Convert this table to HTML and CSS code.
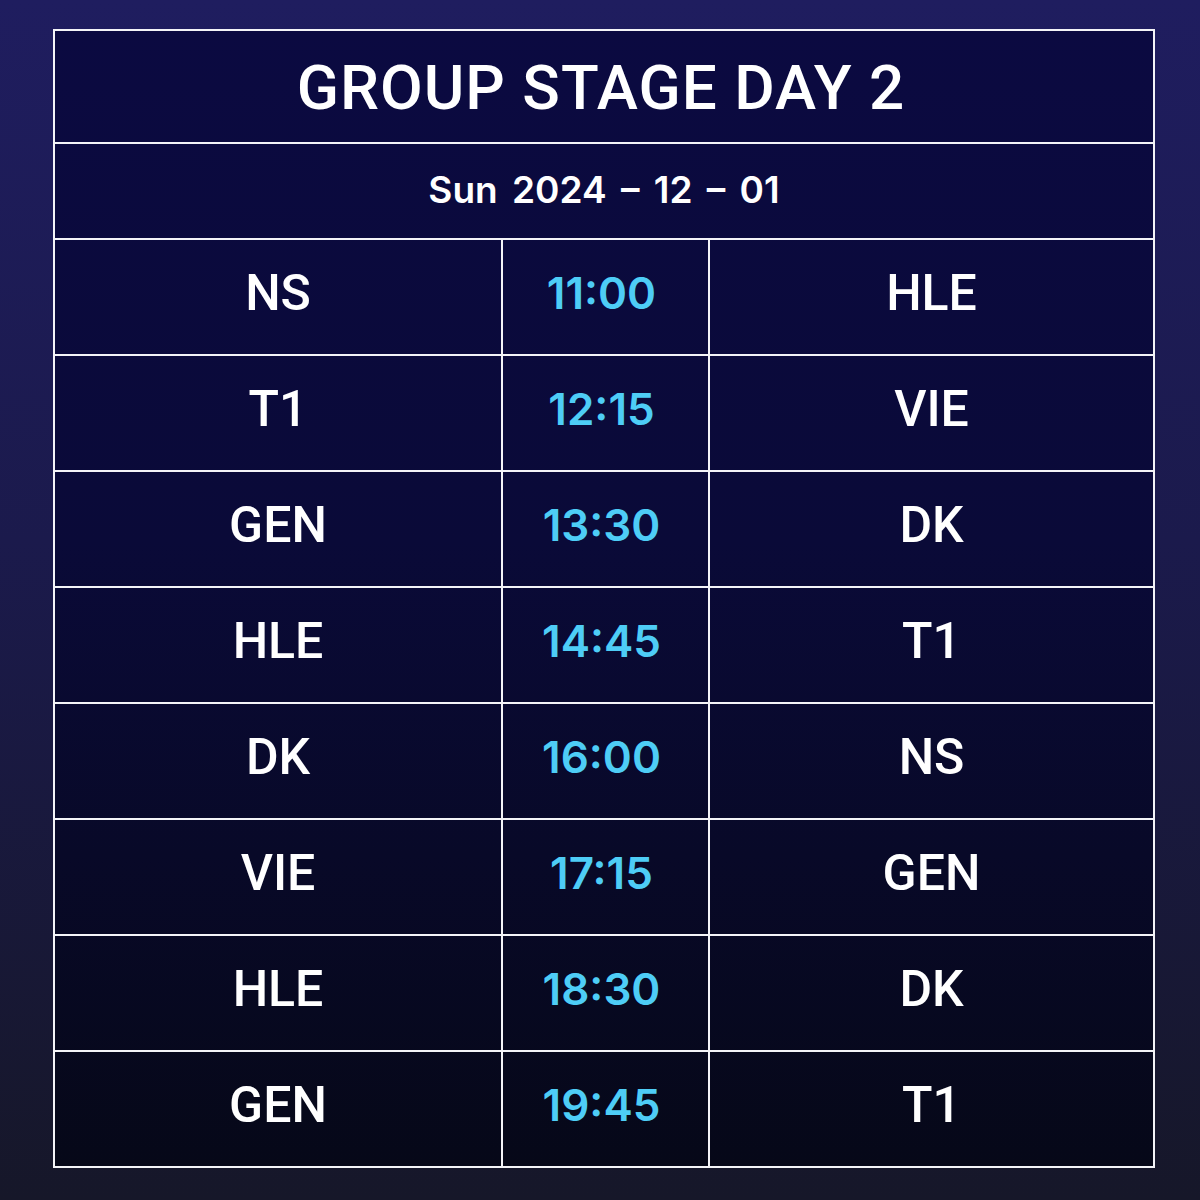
FILE: index.html
```html
<!DOCTYPE html>
<html lang="en">
<head>
    <meta charset="UTF-8">
    <title>Group Stage Day 2</title>
    <link rel="stylesheet" href="styles.css">
</head>
<body>
<div id="page">
    <table id="schedule">
        <colgroup>
            <col class="col-home">
            <col class="col-time">
            <col class="col-away">
        </colgroup>
        <tr class="title-row">
            <td colspan="3" class="stage-title">GROUP STAGE DAY 2</td>
        </tr>
        <tr class="date-row">
            <td colspan="3" class="stage-date">Sun 2024 – 12 – 01</td>
        </tr>
        <tr class="match-row">
            <td class="team">NS</td><td class="time">11:00</td><td class="team">HLE</td>
        </tr>
        <tr class="match-row">
            <td class="team">T1</td><td class="time">12:15</td><td class="team">VIE</td>
        </tr>
        <tr class="match-row">
            <td class="team">GEN</td><td class="time">13:30</td><td class="team">DK</td>
        </tr>
        <tr class="match-row">
            <td class="team">HLE</td><td class="time">14:45</td><td class="team">T1</td>
        </tr>
        <tr class="match-row">
            <td class="team">DK</td><td class="time">16:00</td><td class="team">NS</td>
        </tr>
        <tr class="match-row">
            <td class="team">VIE</td><td class="time">17:15</td><td class="team">GEN</td>
        </tr>
        <tr class="match-row">
            <td class="team">HLE</td><td class="time">18:30</td><td class="team">DK</td>
        </tr>
        <tr class="match-row">
            <td class="team">GEN</td><td class="time">19:45</td><td class="team">T1</td>
        </tr>
    </table>
</div>
</body>
</html>
```

FILE: styles.css
```css
html, body {
    margin: 0;
    padding: 0;
}
body {
    width: 1200px;
    height: 1200px;
    background: linear-gradient(180deg, #1f1d5f 0%, #1b1a4c 45%, #161729 100%);
    color: #ffffff;
    font-family: Roboto, "Liberation Sans", sans-serif;
}
#page {
    padding-top: 29px;
    padding-left: 53px;
}
#schedule {
    width: 1102px;
    border-collapse: collapse;
    border: 2px solid #ffffff;
    background: linear-gradient(180deg, #0b0a41 0%, #0a0a38 45%, #060818 100%);
    table-layout: fixed;
}
.col-home {
    width: 448px;
}
.col-time {
    width: 207px;
}
#schedule td {
    border: 2px solid #f4f4f8;
    padding: 0;
    text-align: center;
}
#schedule .title-row td {
    height: 109px;
    padding: 2px 6px 0 0;
}
#schedule .date-row td {
    height: 90px;
    padding-bottom: 4px;
}
#schedule .match-row td {
    height: 105px;
    padding-bottom: 9px;
}
#schedule .match-row .time {
    padding-right: 8px;
}
.stage-title {
    font-size: 62px;
    font-weight: 500;
    letter-spacing: 1px;
}
.stage-date {
    font-family: Inter, "Noto Sans", sans-serif;
    font-size: 37px;
    font-weight: 600;
    word-spacing: 5px;
}
.team {
    font-size: 50px;
    font-weight: 500;
}
.time {
    font-family: Inter, "Noto Sans", sans-serif;
    font-size: 44px;
    font-weight: 600;
    color: #4ecdf6;
}
```
